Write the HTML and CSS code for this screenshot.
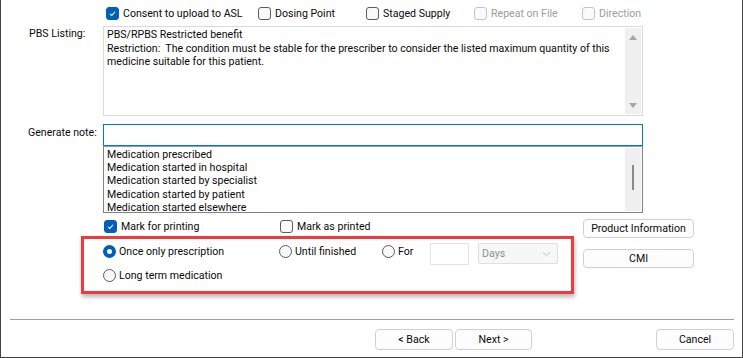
FILE: index.html
```html
<!DOCTYPE html>
<html>
<head>
    <title>Prescription Options</title>
    <link rel="stylesheet" href="styles.css">
</head>
<body>
    <div class="window">
        <div class="top-checks">
            <div class="check w-wide"><span class="box checked"><svg viewBox="0 0 13 13"><path d="M3.5 6.8 L5.6 8.8 L9.6 4.4" /></svg></span>Consent to upload to ASL</div>
            <div class="check"><span class="box"></span>Dosing Point</div>
            <div class="check"><span class="box"></span>Staged Supply</div>
            <div class="check disabled"><span class="box"></span>Repeat on File</div>
            <div class="check disabled"><span class="box"></span>Direction</div>
        </div>

        <div class="field pbs-row">
            <div class="field-label">PBS Listing:</div>
            <div class="memo">
                <div class="memo-text">
                    PBS/RPBS Restricted benefit<br>
                    Restriction:&nbsp; The condition must be stable for the prescriber to consider the listed maximum quantity of this medicine suitable for this patient.
                </div>
                <div class="scrollbar">
                    <span class="arrow up"></span>
                    <span class="arrow down"></span>
                </div>
            </div>
        </div>

        <div class="field note-row">
            <div class="field-label">Generate note:</div>
            <div class="combo-list">
                <div class="note-input"></div>
                <div class="listbox">
                    <ul class="list-items">
                        <li>Medication prescribed</li>
                        <li>Medication started in hospital</li>
                        <li>Medication started by specialist</li>
                        <li>Medication started by patient</li>
                        <li>Medication started elsewhere</li>
                    </ul>
                    <div class="scrollbar">
                        <span class="thumb"></span>
                    </div>
                </div>
            </div>
        </div>

        <div class="lower">
            <div class="lower-main">
                <div class="mark-row">
                    <div class="check mark-first"><span class="box checked"><svg viewBox="0 0 13 13"><path d="M3.5 6.8 L5.6 8.8 L9.6 4.4" /></svg></span>Mark for printing</div>
                    <div class="check"><span class="box"></span>Mark as printed</div>
                </div>
                <div class="highlight">
                    <div class="radio-row">
                        <div class="radio r-first"><span class="dot checked"></span>Once only prescription</div>
                        <div class="radio r-second"><span class="dot"></span>Until finished</div>
                        <div class="radio r-third"><span class="dot"></span>For</div>
                        <div class="days-input"></div>
                        <div class="days-select">Days<svg viewBox="0 0 10 6"><path d="M1 1 L5 5 L9 1" /></svg></div>
                    </div>
                    <div class="radio-row second">
                        <div class="radio"><span class="dot"></span>Long term medication</div>
                    </div>
                </div>
            </div>
            <div class="side-buttons">
                <button class="btn">Product Information</button>
                <button class="btn">CMI</button>
            </div>
        </div>

        <div class="separator"></div>

        <div class="footer">
            <button class="btn nav">&lt; Back</button>
            <button class="btn nav next">Next &gt;</button>
            <button class="btn nav cancel">Cancel</button>
        </div>
    </div>
</body>
</html>
```

FILE: styles.css
```css
body {
    margin: 0;
    background: #ffffff;
    font-family: Roboto, 'Liberation Sans', sans-serif;
    font-size: 10.6px;
    color: #0a0a0a;
}

.window {
    width: 743px;
    height: 358px;
    box-sizing: border-box;
    border: 1px solid #434343;
    border-top: none;
    background: #ffffff;
    display: flex;
    flex-direction: column;
}

/* checkboxes */

.top-checks {
    display: flex;
    padding-left: 105px;
    margin-top: 6px;
    height: 15px;
    align-items: center;
}

.check {
    display: flex;
    align-items: center;
    width: 108px;
    white-space: nowrap;
}

.check.w-wide {
    width: 152px;
}

.check.disabled {
    color: #9d9d9d;
}

.box {
    width: 13px;
    height: 13px;
    box-sizing: border-box;
    border: 1px solid #5c5c5c;
    border-radius: 3px;
    background: #f9f9f9;
    margin-right: 4px;
    flex-shrink: 0;
    display: flex;
}

.check.disabled .box {
    border-color: #c4c4c4;
    background: #fbfbfb;
}

.box.checked {
    background: #005fb8;
    border-color: #005fb8;
}

.box svg {
    width: 11px;
    height: 11px;
}

.box svg path {
    fill: none;
    stroke: #ffffff;
    stroke-width: 1.2;
}

/* fields */

.field {
    display: flex;
}

.field-label {
    width: 102px;
    padding-left: 26px;
    box-sizing: border-box;
    flex-shrink: 0;
    white-space: nowrap;
}

.pbs-row {
    margin-top: 5px;
}

.pbs-row .field-label {
    padding-top: 1px;
    padding-left: 28px;
}

.memo {
    width: 540px;
    height: 90px;
    box-sizing: border-box;
    border: 1px solid #dadada;
    display: flex;
}

.memo-text {
    flex: 1;
    padding: 1px 3px;
    line-height: 13.5px;
}

.scrollbar {
    width: 16px;
    background: #f0f0f0;
    margin: 1px 1px 1px 0;
    display: flex;
    flex-direction: column;
    align-items: center;
}

.arrow {
    width: 0;
    height: 0;
    border-left: 4px solid transparent;
    border-right: 4px solid transparent;
}

.arrow.up {
    border-bottom: 5px solid #a6a6a6;
    margin-top: 7px;
}

.arrow.down {
    border-top: 5px solid #a6a6a6;
    margin-top: auto;
    margin-bottom: 6px;
}

.note-row {
    margin-top: 8px;
}

.note-row .field-label {
    padding-top: 2px;
    padding-left: 27px;
    line-height: 14px;
}

.combo-list {
    width: 540px;
}

.note-input {
    height: 22px;
    box-sizing: border-box;
    border: 1px solid #0078d4;
}

.listbox {
    height: 67px;
    box-sizing: border-box;
    border: 1px solid #828282;
    border-top-color: #9a9a9a;
    display: flex;
}

.list-items {
    flex: 1;
    list-style: none;
    margin: 0;
    padding: 1px 3px 0;
    line-height: 13.2px;
}

.listbox .scrollbar {
    justify-content: center;
}

.thumb {
    width: 2px;
    height: 25px;
    background: #8a8a8a;
    margin-top: -4px;
}

/* lower section */

.lower {
    display: flex;
    margin-top: 6px;
}

.lower-main {
    width: 573px;
}

.mark-row {
    display: flex;
    height: 17px;
    align-items: flex-start;
    padding-left: 103px;
    padding-top: 1px;
    box-sizing: border-box;
}

.mark-row .check.mark-first {
    width: 176px;
}

.highlight {
    margin-left: 80px;
    width: 493px;
    height: 58px;
    box-sizing: border-box;
    border: 3px solid #ee3c3e;
    box-shadow: 1px 3px 4px rgba(0, 0, 0, 0.28);
    padding-left: 19px;
    padding-top: 4px;
}

.radio-row {
    display: flex;
    align-items: flex-start;
    height: 22px;
}

.radio-row.second {
    margin-top: 4px;
    height: 14px;
}

.radio {
    display: flex;
    align-items: center;
    white-space: nowrap;
    margin-top: 2px;
}

.radio-row.second .radio {
    margin-top: 0;
}

.radio.r-first {
    width: 176px;
}

.radio.r-second {
    width: 103px;
}

.radio.r-third {
    width: 48px;
}

.dot {
    width: 13px;
    height: 13px;
    box-sizing: border-box;
    border: 1px solid #5a5a5a;
    border-radius: 50%;
    background: #f9f9f9;
    margin-right: 3px;
    flex-shrink: 0;
}

.dot.checked {
    background: #ffffff;
    border: 4px solid #005fb8;
}

.days-input {
    width: 39px;
    height: 22px;
    box-sizing: border-box;
    border: 1px solid #e3e3e3;
    background: #ffffff;
}

.days-select {
    margin-left: 9px;
    width: 80px;
    height: 21px;
    box-sizing: border-box;
    border: 1px solid #e0e0e0;
    border-radius: 2px;
    background: #f7f7f7;
    color: #8e8e8e;
    display: flex;
    align-items: center;
    padding-left: 3px;
    padding-right: 6px;
    justify-content: space-between;
}

.days-select svg {
    width: 9px;
    height: 6px;
}

.days-select svg path {
    fill: none;
    stroke: #b5b5b5;
    stroke-width: 1;
}

.side-buttons {
    margin-left: 9px;
    display: flex;
    flex-direction: column;
    gap: 11px;
}

.btn {
    font-family: Roboto, 'Liberation Sans', sans-serif;
    font-size: 10.6px;
    color: #0a0a0a;
    background: #fdfdfd;
    border: 1px solid #d0d0d0;
    border-radius: 4px;
    padding: 0;
    width: 111px;
    height: 19px;
    box-sizing: border-box;
}

/* footer */

.separator {
    margin: 25px 8px 0 9px;
    height: 1px;
    background: #a0a0a0;
}

.footer {
    display: flex;
    margin-top: 9px;
    padding-left: 374px;
    padding-right: 8px;
}

.btn.nav {
    width: 78px;
    height: 21px;
}

.btn.next {
    margin-left: 2px;
    width: 77px;
}

.btn.cancel {
    margin-left: auto;
}
```
